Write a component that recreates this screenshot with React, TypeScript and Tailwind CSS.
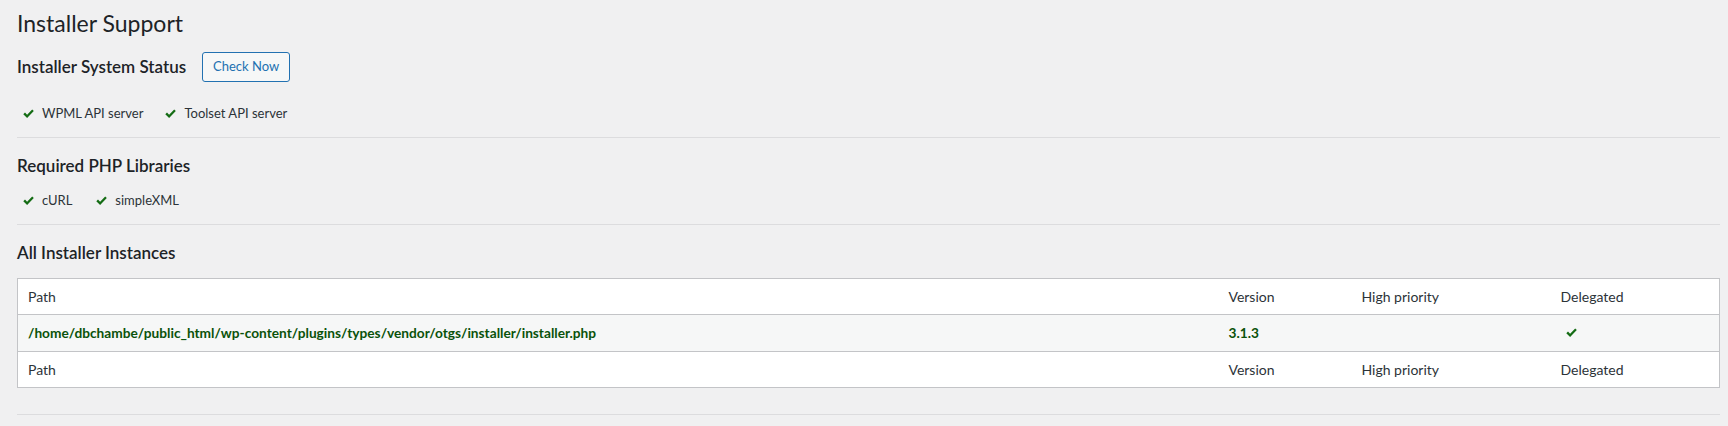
const Check = () => (
  <svg width="11" height="10" viewBox="0 0 11 10" className="shrink-0">
    <path d="M0.3 5.2 L2 3.6 L4.1 5.7 L9.2 0.4 L10.8 2 L4.1 8.9 Z" fill="#146c14" />
  </svg>
);

const StatusItem = ({ label }: { label: string }) => (
  <li className="flex items-center gap-[8px]">
    <Check />
    <span>{label}</span>
  </li>
);

const App = () => {
  return (
    <div className="min-h-screen bg-[#f0f0f1] font-['Lato',sans-serif] text-[#2c3338]">
      <div className="pl-[17px] pr-[8px] pt-[8px]">
        <h1 className="text-[23px] leading-[30px] text-[#1d2327]">Installer Support</h1>

        {/* system status */}
        <div className="flex items-center gap-[16px] mt-[14px] h-[30px]">
          <h2 className="text-[17px] font-semibold text-[#1d2327]">Installer System Status</h2>
          <button className="h-[30px] w-[88px] rounded-[3px] border border-[#2271b1] bg-[#f6f7f7] text-[13px] text-[#2271b1]">
            Check Now
          </button>
        </div>
        <ul className="flex items-center gap-[22px] mt-[22px] h-[20px] pl-[6px] text-[13px]">
          <StatusItem label="WPML API server" />
          <StatusItem label="Toolset API server" />
        </ul>
        <hr className="mt-[13px] border-0 border-t border-[#dcdcde]" />

        {/* php libraries */}
        <h2 className="mt-[16px] h-[24px] leading-[24px] text-[17px] font-semibold text-[#1d2327]">
          Required PHP Libraries
        </h2>
        <ul className="flex items-center gap-[24px] mt-[13px] h-[20px] pl-[6px] text-[13px]">
          <StatusItem label="cURL" />
          <StatusItem label="simpleXML" />
        </ul>
        <hr className="mt-[13px] border-0 border-t border-[#dcdcde]" />

        {/* instances */}
        <h2 className="mt-[16px] h-[24px] leading-[24px] text-[17px] font-semibold text-[#1d2327]">
          All Installer Instances
        </h2>
        <table className="mt-[13px] w-full border border-[#c3c4c7] bg-white text-[14px] border-collapse">
          <thead>
            <tr className="h-[36px] border-b border-[#c3c4c7]">
              <td className="px-[10px]">Path</td>
              <td className="px-[10px] w-[133px]">Version</td>
              <td className="px-[10px] w-[199px]">High priority</td>
              <td className="px-[10px] w-[169px]">Delegated</td>
            </tr>
          </thead>
          <tbody>
            <tr className="h-[37px] bg-[#f6f7f7] border-b border-[#c3c4c7] text-[13.7px] font-bold text-[#0a520a]">
              <td className="px-[10px]">/home/dbchambe/public_html/wp-content/plugins/types/vendor/otgs/installer/installer.php</td>
              <td className="px-[10px]">3.1.3</td>
              <td className="px-[10px]"></td>
              <td className="px-[15px]">
                <Check />
              </td>
            </tr>
          </tbody>
          <tfoot>
            <tr className="h-[36px]">
              <td className="px-[10px]">Path</td>
              <td className="px-[10px]">Version</td>
              <td className="px-[10px]">High priority</td>
              <td className="px-[10px]">Delegated</td>
            </tr>
          </tfoot>
        </table>
        <hr className="mt-[26px] border-0 border-t border-[#dcdcde]" />
      </div>
    </div>
  );
};

export default App;
